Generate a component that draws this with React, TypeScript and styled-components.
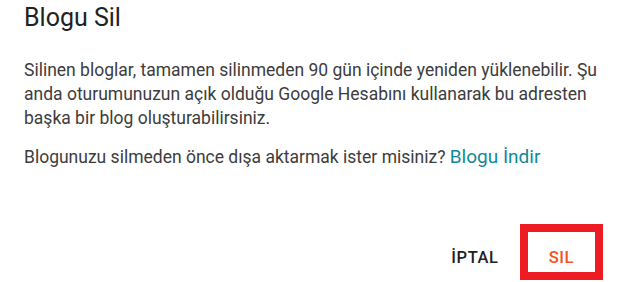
import React from 'react';
import styled, { createGlobalStyle } from 'styled-components';

const GlobalStyle = createGlobalStyle`
  html, body {
    margin: 0;
    padding: 0;
    background: #ffffff;
  }
  body {
    font-family: Roboto, "Noto Sans", Arial, sans-serif;
    -webkit-font-smoothing: antialiased;
  }
`;

const Dialog = styled.div`
  width: 627px;
  height: 282px;
  box-sizing: border-box;
  padding: 2px 24px 0 24px;
  display: flex;
  flex-direction: column;
  background: #fff;
`;

const Title = styled.h2`
  margin: 0;
  font-size: 25px;
  line-height: 32px;
  font-weight: 400;
  color: #212121;
`;

const Body = styled.div`
  margin-top: 24px;
  display: flex;
  flex-direction: column;
  gap: 15px;
`;

const Text = styled.p`
  margin: 0;
  font-size: 17.5px;
  line-height: 24px;
  color: #3c3c3c;
`;

const Link = styled.a`
  font-size: 19px;
  color: #0f8a96;
  text-decoration: none;
  cursor: pointer;
`;

const Actions = styled.div`
  margin-top: auto;
  margin-bottom: 2px;
  display: flex;
  justify-content: flex-end;
  align-items: flex-end;
`;

const Button = styled.button<{ $danger?: boolean }>`
  font-family: Roboto, "Noto Sans", Arial, sans-serif;
  font-size: 16.5px;
  line-height: 19px;
  font-weight: 500;
  letter-spacing: 0.6px;
  text-transform: uppercase;
  background: none;
  cursor: pointer;
  color: ${p => (p.$danger ? '#f4511e' : '#212121')};
  border: 8px solid ${p => (p.$danger ? '#ed1c24' : 'transparent')};
  padding: ${p => (p.$danger ? '16px 21px 5px 21px' : '16px 13px 5px 21px')};
`;

export default function App() {
  return (
    <>
      <GlobalStyle />
      <Dialog>
        <Title>Blogu Sil</Title>
        <Body>
          <Text>
            Silinen bloglar, tamamen silinmeden 90 gün içinde yeniden yüklenebilir. Şu
            anda oturumunuzun açık olduğu Google Hesabını kullanarak bu adresten
            başka bir blog oluşturabilirsiniz.
          </Text>
          <Text>
            Blogunuzu silmeden önce dışa aktarmak ister misiniz? <Link>Blogu İndir</Link>
          </Text>
        </Body>
        <Actions>
          <Button>İptal</Button>
          <Button $danger>Sil</Button>
        </Actions>
      </Dialog>
    </>
  );
}
